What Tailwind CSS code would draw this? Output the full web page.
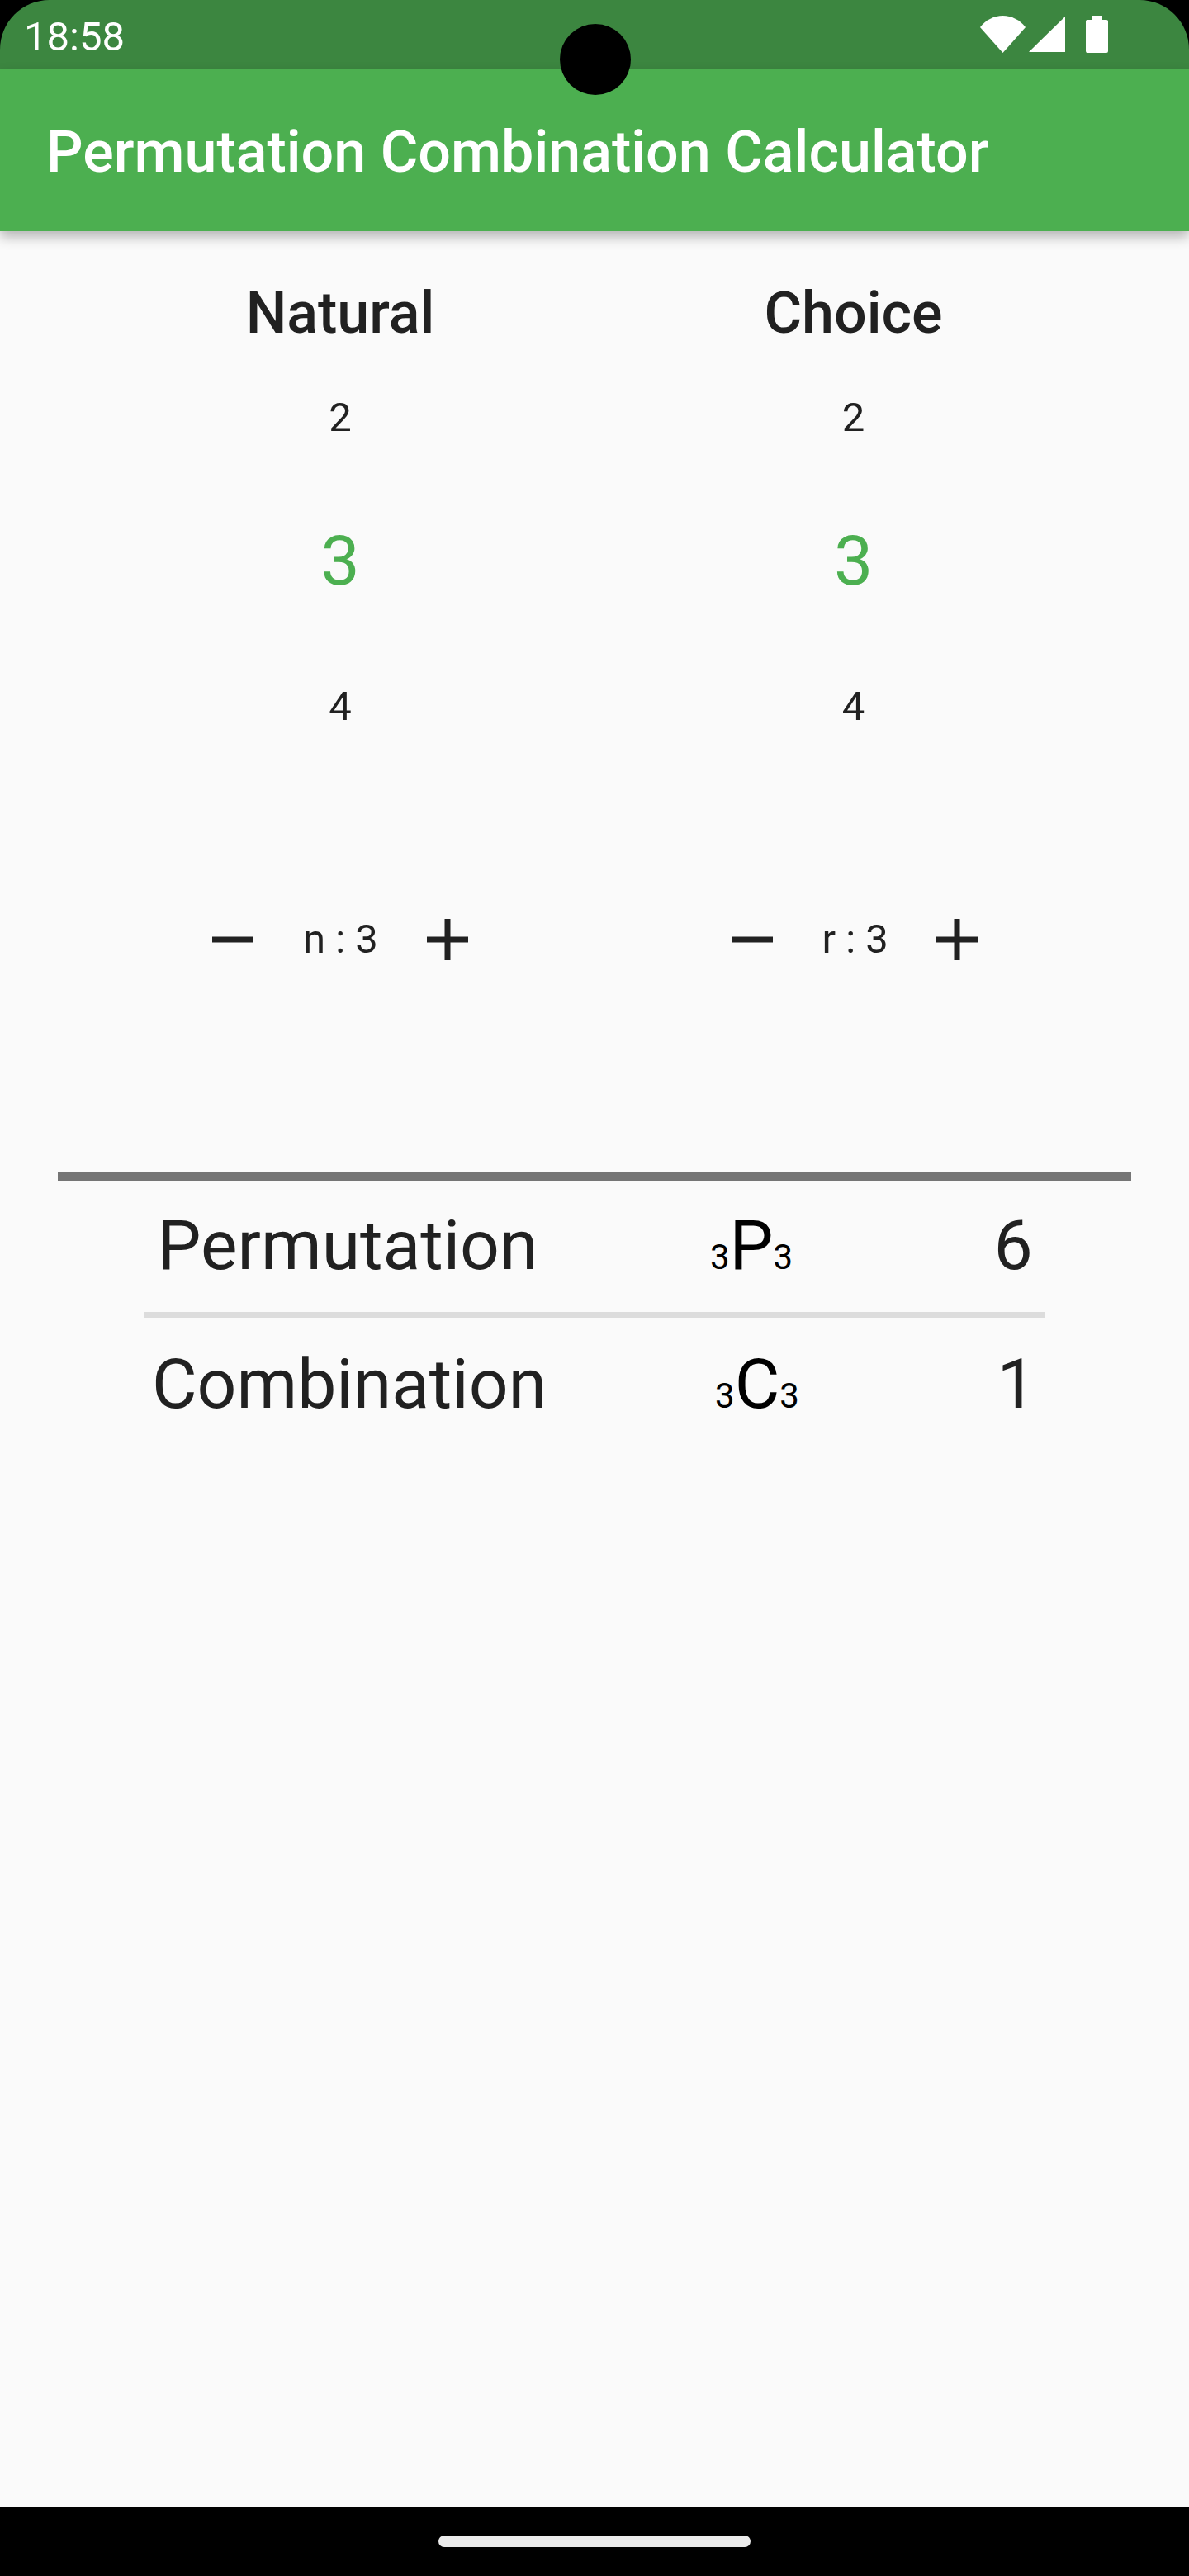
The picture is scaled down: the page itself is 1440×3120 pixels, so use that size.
<!DOCTYPE html>
<html lang="en">
<head>
    <meta charset="UTF-8">
    <title>Permutation Combination Calculator</title>
    <script src="https://cdn.jsdelivr.net/npm/@tailwindcss/browser@4"></script>
</head>
<body class="bg-black font-['Roboto',sans-serif]">
<div class="relative w-[1440px] h-[3120px] flex flex-col overflow-hidden">
    <!-- camera cutout -->
    <div class="absolute left-[678px] top-[29px] w-[86px] h-[86px] rounded-full bg-black z-20"></div>

    <div class="h-[84px] rounded-t-[60px] bg-[#3c8640] flex items-start justify-between pl-[29px] text-white">
        <span class="text-[49px] leading-[57px] mt-[16px] font-normal">18:58</span>
        <div class="flex mr-[98px] mt-[19px]">
            <svg class="w-[55px] h-[45px]" viewBox="0 0 55 45" fill="#fff"><path d="M0 14 C7 5 17 0 27.500 0 C38 0 48 5 55 14 L27.500 45 Z"/></svg>
            <svg class="w-[44px] h-[45px] ml-[4px]" viewBox="0 0 44 45" fill="#fff"><path d="M44 1 V44 H0 Z"/></svg>
            <svg class="w-[27px] h-[45px] ml-[25px]" viewBox="0 0 27 45" fill="#fff"><path d="M7 0 H20 V5 H25 Q27 5 27 7 V43 Q27 45 25 45 H2 Q0 45 0 43 V7 Q0 5 2 5 H7 Z"/></svg>
        </div>
    </div>
    <header class="relative z-10 h-[196px] bg-[#4caf50] flex items-center pl-[56px] pt-[4px] shadow-[0_7px_14px_rgba(0,0,0,0.28)]">
        <h1 class="text-[70px] font-medium text-white leading-none">Permutation Combination Calculator</h1>
    </header>

    <main class="flex-1 bg-[#fafafa] flex flex-col text-[#212121]">
        <div class="flex pt-[58px]">
            <section class="w-[724px] flex flex-col items-center pl-[100px]">
                <h2 class="text-[70px] font-medium leading-[82px]">Natural</h2>
                <div class="w-[350px] flex flex-col items-center -mt-[2px]">
                    <span class="h-[175px] flex items-center text-[49px]">2</span>
                    <span class="h-[175px] flex items-center pb-[2px] text-[84px] text-[#4caf50]">3</span>
                    <span class="h-[175px] flex items-center text-[49px]">4</span>
                </div>
                <div class="flex items-center justify-center mt-[166px] w-[350px]">
                    <svg class="w-[50px] h-[50px] mr-[60px]" viewBox="0 0 50 50" fill="#212121"><rect y="21.500" width="50" height="7"/></svg>
                    <span class="text-[49px] leading-[57px] w-[90px] text-center whitespace-nowrap">n : 3</span>
                    <svg class="w-[50px] h-[50px] ml-[60px]" viewBox="0 0 50 50" fill="#212121"><path d="M0 21.500 H21.500 V0 H28.500 V21.500 H50 V28.500 H28.500 V50 H21.500 V28.500 H0 Z"/></svg>
                </div>
            </section>
            <section class="w-[716px] flex flex-col items-center pr-[97px]">
                <h2 class="text-[70px] font-medium leading-[82px]">Choice</h2>
                <div class="w-[350px] flex flex-col items-center -mt-[2px]">
                    <span class="h-[175px] flex items-center text-[49px]">2</span>
                    <span class="h-[175px] flex items-center pb-[2px] text-[84px] text-[#4caf50]">3</span>
                    <span class="h-[175px] flex items-center text-[49px]">4</span>
                </div>
                <div class="flex items-center justify-center mt-[166px] w-[350px] pl-[2px]">
                    <svg class="w-[50px] h-[50px] mr-[60px]" viewBox="0 0 50 50" fill="#212121"><rect y="21.500" width="50" height="7"/></svg>
                    <span class="text-[49px] leading-[57px] w-[78px] text-center whitespace-nowrap">r : 3</span>
                    <svg class="w-[50px] h-[50px] ml-[60px]" viewBox="0 0 50 50" fill="#212121"><path d="M0 21.500 H21.500 V0 H28.500 V21.500 H50 V28.500 H28.500 V50 H21.500 V28.500 H0 Z"/></svg>
                </div>
            </section>
        </div>

        <div class="mx-[70px] h-[11px] bg-[#757575] mt-[253px]"></div>

        <div class="mx-[175px]">
            <div class="h-[159px] pb-[2px] grid grid-cols-[492px_1fr_80px] items-center text-[84px] leading-none">
                <span class="text-center">Permutation</span>
                <span class="text-center text-black pr-[32px]"><span class="text-[42px]">3</span>P<span class="text-[42px]">3</span></span>
                <span class="text-center pl-[4px]">6</span>
            </div>
            <div class="h-[7px] bg-[#dcdcdc]"></div>
            <div class="h-[161px] grid grid-cols-[492px_1fr_80px] items-center text-[84px] leading-none">
                <span class="text-center pl-[4px]">Combination</span>
                <span class="text-center text-black pr-[18px]"><span class="text-[42px]">3</span>C<span class="text-[42px]">3</span></span>
                <span class="text-center pl-[12px]">1</span>
            </div>
        </div>
    </main>

    <div class="h-[84px] bg-black flex items-start justify-center pt-[35px]">
        <div class="w-[378px] h-[14px] rounded-full bg-[#ebebeb]"></div>
    </div>
</div>
</body>
</html>
